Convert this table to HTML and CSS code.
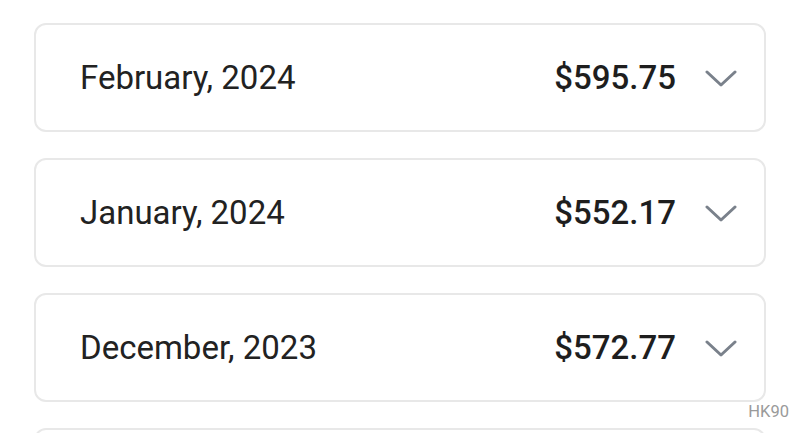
FILE: index.html
```html
<!DOCTYPE html>
<html>
<head>
<meta charset="utf-8">
<link rel="stylesheet" href="styles.css">
</head>
<body>
<div class="list">
  <div class="card">
    <span class="month">February, 2024</span>
    <span class="right"><span class="amount">$595.75</span><svg class="chev" viewBox="0 0 32 18"><path d="M2 2 L16 15 L30 2" /></svg></span>
  </div>
  <div class="card">
    <span class="month">January, 2024</span>
    <span class="right"><span class="amount">$552.17</span><svg class="chev" viewBox="0 0 32 18"><path d="M2 2 L16 15 L30 2" /></svg></span>
  </div>
  <div class="card">
    <span class="month">December, 2023</span>
    <span class="right"><span class="amount">$572.77</span><svg class="chev" viewBox="0 0 32 18"><path d="M2 2 L16 15 L30 2" /></svg></span>
  </div>
  <div class="card"></div>
</div>
<div class="mark">HK90</div>
</body>
</html>
```
FILE: styles.css
```css
html, body {
  margin: 0;
  padding: 0;
  background: #fff;
  overflow: hidden;
  height: 433px;
}
body {
  font-family: Roboto, "Noto Sans", sans-serif;
  position: relative;
}
.list {
  box-sizing: border-box;
  height: 433px;
  overflow: hidden;
  display: flex;
  flex-direction: column;
  gap: 26px;
  padding: 23px 34px 0 34px;
}
.card {
  box-sizing: border-box;
  height: 109px;
  flex: none;
  border: 2px solid #e8e8e8;
  border-radius: 12px;
  display: flex;
  align-items: center;
  justify-content: space-between;
  padding: 0 27px 0 44px;
}
.month {
  font-size: 33px;
  color: #222;
}
.right {
  display: flex;
  align-items: center;
  gap: 29px;
}
.amount {
  font-size: 33px;
  font-weight: 500;
  color: #1e1e1e;
}
.chev {
  width: 32px;
  height: 18px;
  margin-top: 2px;
}
.chev path {
  fill: none;
  stroke: #7a818b;
  stroke-width: 3;
  stroke-linecap: round;
  stroke-linejoin: round;
}
.mark {
  position: absolute;
  right: 11px;
  top: 402px;
  font-size: 16.5px;
  color: #9a9a9a;
  background: #fff;
  padding: 0 0 0 2px;
}
```
